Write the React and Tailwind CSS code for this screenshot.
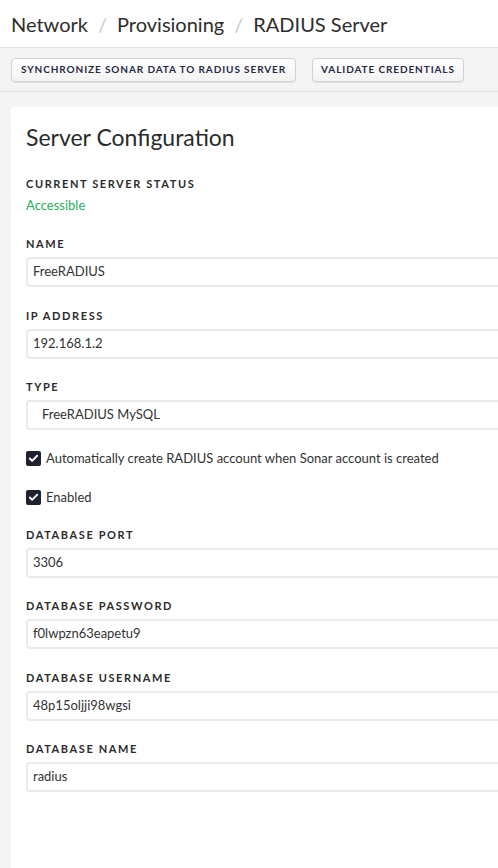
import { Check } from "lucide-react";

const fields = [
  { label: "Database Port", value: "3306" },
  { label: "Database Password", value: "f0lwpzn63eapetu9" },
  { label: "Database Username", value: "48p15oljji98wgsi" },
  { label: "Database Name", value: "radius" },
];

function Field({ label, value, select }) {
  return (
    <div className="mb-[20.5px]">
      <div className="text-[11px] font-bold uppercase tracking-[1.6px] leading-4 text-[#2b2b2b] mb-[5px]">
        {label}
      </div>
      <div
        className={`h-[30px] rounded-[4px] border-2 border-[#ebebeb] bg-white flex items-center text-[13px] text-[#333] ${
          select ? "pl-[14px]" : "pl-[5px]"
        }`}
      >
        {value}
      </div>
    </div>
  );
}

function Checkbox({ label }) {
  return (
    <label className="flex items-center gap-[5px] text-[13px] text-[#333] h-[16px]">
      <span className="w-[15px] h-[15px] rounded-[2px] bg-[#1d2130] flex items-center justify-center">
        <Check className="w-[11px] h-[11px] text-white" strokeWidth={4} />
      </span>
      {label}
    </label>
  );
}

export default function App() {
  return (
    <div className="min-h-[868px] bg-[#f4f4f4] font-['Lato','Liberation_Sans',sans-serif] overflow-hidden">
      {/* Breadcrumb */}
      <div className="h-[48px] bg-white border-b border-[#dedede] flex items-center px-[11px] text-[20px] text-[#2e2e2e]">
        <span>Network</span>
        <span className="mx-[10px] text-[#c8c8c8]">/</span>
        <span>Provisioning</span>
        <span className="mx-[10px] text-[#c8c8c8]">/</span>
        <span>RADIUS Server</span>
      </div>

      {/* Toolbar */}
      <div className="h-[44px] border-b border-[#dedede] flex items-center gap-4 px-[11px]">
        <button className="h-[24px] px-[9px] rounded-[4px] border border-[#d2d2d2] bg-gradient-to-b from-white to-[#f3f3f3] shadow-[0_1px_1px_rgba(0,0,0,0.08)] text-[10px] font-bold uppercase tracking-[0.9px] text-[#262a45]">
          Synchronize Sonar data to RADIUS server
        </button>
        <button className="h-[24px] px-[8px] rounded-[4px] border border-[#d2d2d2] bg-gradient-to-b from-white to-[#f3f3f3] shadow-[0_1px_1px_rgba(0,0,0,0.08)] text-[10px] font-bold uppercase tracking-[0.9px] text-[#262a45]">
          Validate credentials
        </button>
      </div>

      {/* Card */}
      <div className="ml-[11px] mt-[15px] w-[520px] bg-white rounded-[3px] pl-[15px] pt-[14px] pb-[80px]">
        <h1 className="text-[23px] leading-8 text-[#2b2b2b] mb-[23px]">Server Configuration</h1>

        <div className="mb-[22px]">
          <div className="text-[11px] font-bold uppercase tracking-[1.6px] leading-4 text-[#2b2b2b] mb-[4px]">
            Current Server Status
          </div>
          <div className="text-[13px] leading-[18px] text-[#27ae60]">Accessible</div>
        </div>

        <Field label="Name" value="FreeRADIUS" />
        <Field label="IP Address" value="192.168.1.2" />
        <Field label="Type" value="FreeRADIUS MySQL" select />

        <div className="flex flex-col gap-[23px] mb-[21px]">
          <Checkbox label="Automatically create RADIUS account when Sonar account is created" />
          <Checkbox label="Enabled" />
        </div>

        {fields.map((f) => (
          <Field key={f.label} label={f.label} value={f.value} />
        ))}
      </div>
    </div>
  );
}
